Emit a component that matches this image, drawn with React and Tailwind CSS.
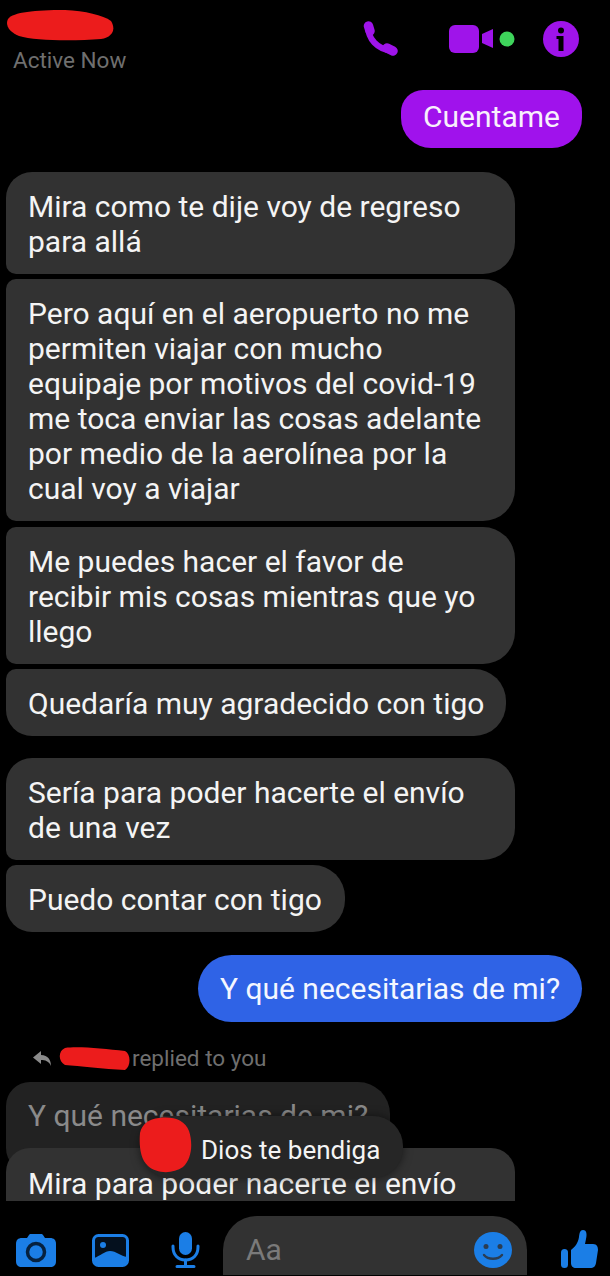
import React from 'react';

const Bubble = ({ children, className = '' }) => (
  <div className={`shrink-0 whitespace-nowrap rounded-r-[32px] bg-[#323232] pb-[15px] pl-[22px] pr-[10px] pt-[17px] text-[30px] leading-[35px] text-[#f4f4f4] ${className}`}>
    {children}
  </div>
);

const Phone = () => (
  <svg width="35" height="35" viewBox="0 0 35 35">
    <path d="M5 5 C5 18 14 28 29 30" fill="none" stroke="#9f14ea" strokeWidth="6" />
    <path d="M5.5 5 L7 10" fill="none" stroke="#9f14ea" strokeWidth="9.5" strokeLinecap="round" />
    <path d="M24 27 L30 30" fill="none" stroke="#9f14ea" strokeWidth="9.5" strokeLinecap="round" />
  </svg>
);

const Video = () => (
  <svg width="67" height="30" viewBox="0 0 67 30">
    <rect x="0" y="0" width="30" height="28" rx="6" fill="#9f14ea" />
    <path d="M33 9 L44 4 L44 23 L33 18 Z" fill="#9f14ea" />
    <circle cx="58" cy="14" r="7.5" fill="#3ed45b" />
  </svg>
);

const Info = () => (
  <svg width="36" height="36" viewBox="0 0 36 36">
    <circle cx="18" cy="18" r="18" fill="#9f14ea" />
    <circle cx="18" cy="9.5" r="3" fill="#000" />
    <path d="M13.5 15 H20.5 V30 H15.5 V18 H13.5 Z" fill="#000" />
  </svg>
);

const Camera = () => (
  <svg width="40" height="33" viewBox="0 0 40 33">
    <path d="M6 4 H11 L13 1 C13.5 0.3 14 0 15 0 H25 C26 0 26.5 0.3 27 1 L29 4 H34 C38 4 40 6 40 10 V27 C40 31 38 33 34 33 H6 C2 33 0 31 0 27 V10 C0 6 2 4 6 4 Z" fill="#1b7ee6" />
    <circle cx="20" cy="18" r="8.5" fill="none" stroke="#06213f" strokeWidth="3.5" />
  </svg>
);

const Gallery = () => (
  <svg width="37" height="33" viewBox="0 0 37 33">
    <rect x="1.5" y="1.5" width="34" height="30" rx="5" fill="#04101e" stroke="#1b7ee6" strokeWidth="3" />
    <circle cx="11" cy="11" r="3" fill="#1b7ee6" />
    <path d="M2 24 C8 22 13 17 18 17 C24 17 29 22 35 23 V27 C35 30 33 32 30 32 H7 C4 32 2 30 2 27 Z" fill="#1b7ee6" />
  </svg>
);

const Mic = () => (
  <svg width="29" height="36" viewBox="0 0 29 36">
    <rect x="8" y="0" width="13" height="23" rx="6.5" fill="#1b7ee6" />
    <path d="M2 14 V15 C2 23 7 28 14.5 28 C22 28 27 23 27 15 V14" fill="none" stroke="#1b7ee6" strokeWidth="3" strokeLinecap="round" />
    <path d="M14.5 28 V34 M6 34.5 H23" fill="none" stroke="#1b7ee6" strokeWidth="3" strokeLinecap="round" />
  </svg>
);

const Smile = () => (
  <svg width="38" height="36" viewBox="0 0 38 36">
    <ellipse cx="19" cy="18" rx="19" ry="18" fill="#1b7ee6" />
    <ellipse cx="12" cy="14.5" rx="2.5" ry="2.5" fill="#2b3d52" />
    <ellipse cx="26" cy="14.5" rx="2.5" ry="2.5" fill="#2b3d52" />
    <path d="M10 23 C14 28 24 28 28 23" fill="none" stroke="#2b3d52" strokeWidth="2.4" strokeLinecap="round" />
  </svg>
);

const Thumb = () => (
  <svg width="37" height="38" viewBox="0 0 37 38">
    <rect x="0" y="19" width="7" height="19" rx="3.5" fill="#1b7ee6" />
    <path d="M10 20 C14 17 17 13 18 7 C18.5 3 19 0 22 0 C26 0 26 5 25 9 L24 14 H32 C36 14 37 17 37 20 L35 33 C34.5 36 33 38 29 38 H15 C12 38 10 36 10 33 Z" fill="#1b7ee6" />
  </svg>
);

const ReplyArrow = () => (
  <svg width="19" height="15" viewBox="0 0 19 15">
    <path d="M8 0 L0 6.5 L8 13 V9 C12 9 16 10 18 15 C18 9 15 4 8 4 Z" fill="#8a8a8a" />
  </svg>
);

const Scribble = ({ width, height, d }) => (
  <svg width={width} height={height} viewBox={`0 0 ${width} ${height}`}>
    <path d={d} fill="#ec1c1c" />
  </svg>
);

export default function App() {
  return (
    <div className="flex h-[1276px] w-[610px] flex-col overflow-hidden bg-black font-['Roboto',sans-serif]">
      <header className="flex h-[90px] shrink-0 justify-between pl-[5px] pr-[31px]">
        <div className="pt-[9px]">
          <Scribble width={110} height={32} d="M3 10 C8 3 30 1 60 1 C80 2 98 6 106 12 C111 20 108 28 96 30 C70 32 30 32 14 27 C4 23 0 16 3 10 Z" />
          <div className="ml-[8px] mt-[6px] text-[22.5px] leading-[26px] text-[#6f6f6f]">Active Now</div>
        </div>
        <div className="flex items-start pt-[21px]">
          <Phone />
          <div className="ml-[51px] mt-[4px]"><Video /></div>
          <div className="ml-[27px]"><Info /></div>
        </div>
      </header>

      <main className="relative flex h-[1111px] shrink-0 flex-col items-start overflow-hidden px-[6px]">
        <div className="mr-[22px] flex h-[58px] w-[181px] shrink-0 items-center justify-center self-end rounded-b-[30px] rounded-t-[22px] bg-[#a012ec] pb-[6px] text-[30px] text-[#f8f0fc]">
          Cuentame
        </div>

        <Bubble className="mt-[24px] w-[509px] rounded-bl-[10px] rounded-tl-[26px]">
          Mira como te dije voy de regreso<br />para allá
        </Bubble>
        <Bubble className="mt-[5px] w-[509px] rounded-l-[10px]">
          Pero aquí en el aeropuerto no me<br />
          permiten viajar con mucho<br />
          equipaje por motivos del covid-19<br />
          me toca enviar las cosas adelante<br />
          por medio de la aerolínea por la<br />
          cual voy a viajar
        </Bubble>
        <Bubble className="mt-[6px] w-[509px] rounded-l-[10px]">
          Me puedes hacer el favor de<br />
          recibir mis cosas mientras que yo<br />
          llego
        </Bubble>
        <Bubble className="mt-[5px] w-[500px] rounded-bl-[26px] rounded-tl-[10px]">Quedaría muy agradecido con tigo</Bubble>

        <Bubble className="mt-[22px] w-[509px] rounded-bl-[10px] rounded-tl-[26px]">
          Sería para poder hacerte el envío<br />de una vez
        </Bubble>
        <Bubble className="mt-[5px] w-[339px] rounded-bl-[26px] rounded-tl-[10px]">Puedo contar con tigo</Bubble>

        <div className="mr-[22px] mt-[23px] flex h-[67px] w-[384px] shrink-0 items-center justify-center self-end whitespace-nowrap rounded-[34px] bg-[#2f63e6] text-[30px] text-[#f4f7ff]">
          Y qué necesitarias de mi?
        </div>

        <div className="ml-[27px] mt-[24px] flex h-[25px] shrink-0 items-center whitespace-nowrap text-[22.5px] text-[#6f6f6f]">
          <ReplyArrow />
          <span className="ml-[7px]">
            <Scribble width={71} height={25} d="M6 2 C20 0 45 3 66 5 C72 8 72 20 66 24 C45 23 20 20 6 19 C-1 15 -1 5 6 2 Z" />
          </span>
          <span className="ml-[2px]">replied to you</span>
        </div>

        <div className="mt-[11px] h-[90px] w-[384px] shrink-0 whitespace-nowrap rounded-l-[24px] rounded-r-[32px] bg-[#222222] pl-[22px] pt-[16px] text-[30px] leading-[35px] text-[#8a8a8a]">
          Y qué necesitarias de mi?
        </div>
        <div className="-mt-[24px] h-[53px] w-[509px] shrink-0 whitespace-nowrap rounded-t-[24px] bg-[#323232] pl-[22px] pt-[18px] text-[30px] leading-[35px] text-[#f4f4f4]">
          Mira para poder hacerte el envío
        </div>

        {/* reaction toast over the messages */}
        <div className="absolute left-[140px] top-[1026px] flex h-[62px] w-[263px] items-center rounded-[30px] bg-[#262626] pl-[61px] pt-[6px] text-[26px] text-[#f4f4f4] shadow-[0_0_10px_rgba(0,0,0,0.5)]">
          Dios te bendiga
        </div>
        <div className="absolute left-[139px] top-[1027px]">
          <Scribble width={54} height={57} d="M20 1 C34 -1 46 3 50 14 C54 26 53 42 44 50 C34 57 18 57 9 49 C1 42 0 28 1 16 C3 7 10 2 20 1 Z" />
        </div>
      </main>

      <footer className="flex h-[74px] shrink-0 items-start pl-[16px] pt-[15px]">
        <div className="mt-[18px] flex items-start">
          <Camera />
          <div className="ml-[36px]"><Gallery /></div>
          <div className="-mt-[2px] ml-[42px]"><Mic /></div>
        </div>
        <div className="ml-[23px] flex h-[59px] w-[304px] shrink-0 items-start justify-between rounded-t-[34px] bg-[#323232] pl-[23px] pr-[15px] pt-[16px]">
          <span className="text-[30px] leading-[36px] text-[#7a7a7a]">Aa</span>
          <Smile />
        </div>
        <div className="ml-[34px] mt-[14px]"><Thumb /></div>
      </footer>
    </div>
  );
}
